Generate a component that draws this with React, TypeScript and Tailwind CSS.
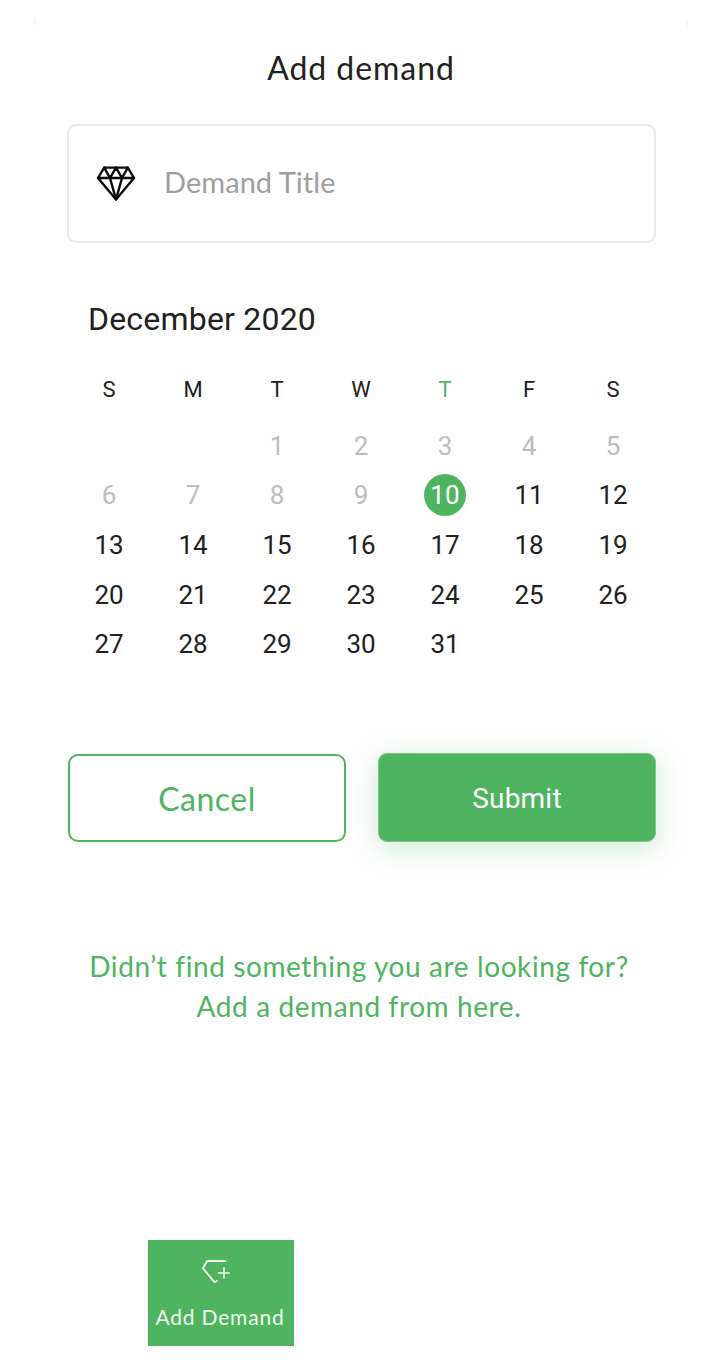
const WEEKDAYS = ["S", "M", "T", "W", "T", "F", "S"];
const LEADING_BLANKS = 2;
const TODAY = 10;
const DAYS = Array.from({ length: 31 }, (_, i) => i + 1);

function DiamondIcon() {
  return (
    <svg className="-mt-0.5" width="40" height="36" viewBox="0 0 40 36" fill="none" stroke="#0b0b0b" strokeWidth="2.4" strokeLinejoin="round" strokeLinecap="round">
      <path d="M8.2 2.6H31.8L38 13L20 34.4L2 13Z" />
      <path d="M2 13H38" />
      <path d="M8.2 2.6L14 13L20 2.6L26 13L31.8 2.6" />
      <path d="M14 13L20 34.4L26 13" />
    </svg>
  );
}

function AddDemandIcon() {
  return (
    <svg width="30" height="26" viewBox="0 0 30 26" fill="none" stroke="#f1faf2" strokeWidth="1.8" strokeLinecap="round" strokeLinejoin="round">
      <path d="M24.5 2H6.2L1.9 9.2L12.8 22.4Q14.2 23.8 15.8 21.8" />
      <path strokeWidth="1.5" d="M17.5 14H28.2M23 8.7V19.3" />
    </svg>
  );
}

function Calendar() {
  return (
    <section className="mt-[57px] font-[Roboto,sans-serif] text-[#212121]">
      <h2 className="ml-[21px] text-[32px] leading-[38px] tracking-[0.2px]">December 2020</h2>
      <div className="mt-[35px] grid w-[588px] grid-cols-7 text-center text-[22px] leading-[34px]">
        {WEEKDAYS.map((day, i) => (
          <span key={i} className={i === 4 ? "text-[#4fb45f]" : ""}>{day}</span>
        ))}
      </div>
      <div className="mt-[14.5px] grid w-[588px] auto-rows-[49.6px] grid-cols-7 place-items-center text-[26px]">
        {Array.from({ length: LEADING_BLANKS }, (_, i) => (
          <span key={`blank-${i}`} />
        ))}
        {DAYS.map((day) => (
          <span
            key={day}
            className={
              day === TODAY
                ? "mb-[1px] ml-[0.8px] flex size-[42px] items-center justify-center rounded-full bg-[#4fb45f] pr-px pt-px text-white"
                : day < TODAY
                  ? "text-[#bdbdbd]"
                  : ""
            }
          >
            {day}
          </span>
        ))}
      </div>
    </section>
  );
}

export default function App() {
  return (
    <main className="relative flex h-[1362px] w-[720px] flex-col overflow-hidden bg-[#fefefe] px-[67px] font-[Lato,sans-serif]">
      <svg className="absolute left-[33px] top-[18px]" width="656" height="10" fill="none" stroke="#f0f0f0">
        <path d="M2.5 1Q1.5 4 1.5 8M653.5 1Q654.5 4 654.5 8" />
      </svg>
      <h1 className="mt-12 pl-0.5 text-center text-[32px] leading-10 tracking-[0.95px] text-[#212121]">Add demand</h1>

      <label className="mt-9 flex h-[119px] w-[588.5px] items-center rounded-[9px] border-2 border-[#e8e8e8] pl-[27px]">
        <DiamondIcon />
        <span className="-mt-1 ml-7 text-[29px] leading-9 tracking-[0.05px] text-[#9e9e9e]">Demand Title</span>
      </label>

      <Calendar />

      <div className="mt-[84px] flex h-[89px] w-[589px] gap-8 pl-px">
        <button className="mt-[0.5px] h-[88px] w-[278px] rounded-[10px] border-2 border-[#4fb45f] pt-0.5 text-[32px] tracking-[0.5px] text-[#4fb45f]">Cancel</button>
        <button className="h-[89px] w-[278px] rounded-[9px] border border-[#7dc888] bg-[#4fb45f] pt-0.5 font-[Roboto,sans-serif] text-[28px] tracking-[0.2px] text-white shadow-[0_6px_28px_rgba(79,180,95,0.28)]">Submit</button>
      </div>

      <p className="mt-[104px] whitespace-nowrap pr-0.5 text-center text-[28px] leading-10 tracking-[0.6px] text-[#4fb45f]">
        Didn’t find something you are looking for?
        <br />
        Add a demand from here.
      </p>

      <button className="ml-[81px] mt-[213.5px] flex h-[106px] w-[146px] flex-col items-center bg-[#4fb45f] text-[#f1faf2]">
        <span className="mr-[11px] mt-[19px]"><AddDemandIcon /></span>
        <span className="mr-0.5 mt-[18px] whitespace-nowrap text-[21px] leading-7 tracking-[0.8px]">Add Demand</span>
      </button>
    </main>
  );
}
